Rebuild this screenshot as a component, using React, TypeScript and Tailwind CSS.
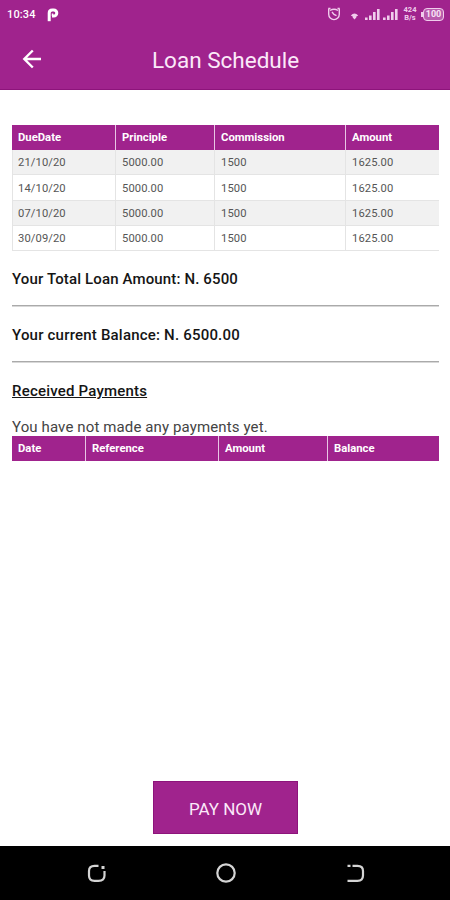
const schedule = [
  { dueDate: '21/10/20', principle: '5000.00', commission: '1500', amount: '1625.00' },
  { dueDate: '14/10/20', principle: '5000.00', commission: '1500', amount: '1625.00' },
  { dueDate: '07/10/20', principle: '5000.00', commission: '1500', amount: '1625.00' },
  { dueDate: '30/09/20', principle: '5000.00', commission: '1500', amount: '1625.00' },
]

function SignalIcon() {
  return (
    <svg width="15" height="13" viewBox="0 0 15 13" fill="#f0cdec">
      <rect x="0" y="9.500" width="2.600" height="2.500" />
      <rect x="4" y="7.500" width="2.600" height="4.500" />
      <rect x="8" y="4" width="2.600" height="8" />
      <rect x="12" y="1" width="2.600" height="11" />
    </svg>
  )
}

function StatusBar() {
  return (
    <div className="flex h-[28px] items-center pl-[7px] pr-[6px] text-white">
      <span className="w-[29px] whitespace-nowrap pt-px text-[11px] font-medium leading-[28px] tracking-[0.15px]">10:34</span>
      <svg className="ml-[11px] mt-px" width="12" height="14" viewBox="0 0 12 14" fill="none" stroke="#fff" strokeWidth="3">
        <path d="M2.200 13.200V8" />
        <path d="M2.200 8V5q0-3 3-3h1.600a3 3 0 0 1 0 6H5" />
        <path d="M5.500 8V5.500" strokeWidth="1.500" />
      </svg>
      <div className="ml-auto flex items-center">
        <svg width="14" height="14" viewBox="0 0 14 14" fill="none" stroke="#f0cdec" strokeWidth="1.4">
          <path d="M1.2 1.5h2.3M10.5 1.5h2.3M1.7 2v5.3a5.3 5.3 0 0 0 10.6 0V2" />
          <path d="M3 3.5Q7 1 11 3.5M5 5l2 2.5 2.5 1.2" />
        </svg>
        <svg className="ml-[9px] mt-[3px]" width="9" height="8" viewBox="0 0 9 8" fill="#f0cdec">
          <path d="M.8 3.600Q4.500-.6 8.200 3.600L6.300 4.400V5.500L4.500 7.600L2.700 5.500V4.400Z" />
        </svg>
        <span className="ml-[6px]"><SignalIcon /></span>
        <span className="ml-[3px]"><SignalIcon /></span>
        <div className="ml-[5px] flex w-[14px] flex-col items-center text-[7.5px] font-bold leading-[8px] text-[#f0cdec]">
          <span>424</span>
          <span>B/s</span>
        </div>
        <div className="ml-[4px] flex items-center">
          <div className="h-[5px] w-[2px] bg-[#f0cdec]" />
          <div className="flex h-[13px] w-[21px] items-center justify-center rounded-[4px] border border-[#f0cdec] bg-[#b95bad] text-[9px] font-bold leading-none text-[#f7e3f5]">
            100
          </div>
        </div>
      </div>
    </div>
  )
}

function HeaderCell({ label, first = false }: { label: string; first?: boolean }) {
  return (
    <th className={`h-[25px] pl-[6px] text-left align-middle text-[11.3px] font-bold leading-none text-white ${first ? '' : 'border-l border-[#e8c6e5]'}`}>
      {label}
    </th>
  )
}

function ScheduleTable() {
  return (
    <table className="w-[427px] table-fixed border-separate border-spacing-0">
      <colgroup>
        <col className="w-[103px]" />
        <col className="w-[99px]" />
        <col className="w-[131px]" />
        <col className="w-[94px]" />
      </colgroup>
      <thead>
        <tr className="bg-[#a0238d]">
          <HeaderCell label="DueDate" first />
          <HeaderCell label="Principle" />
          <HeaderCell label="Commission" />
          <HeaderCell label="Amount" />
        </tr>
      </thead>
      <tbody className="text-[11.2px] leading-none tracking-[0.1px] text-[#555]">
        {schedule.map((row) => (
          <tr key={row.dueDate} className="h-[25px] odd:bg-[#f1f1f1] nth-[2]:h-[26px]">
            {[row.dueDate, row.principle, row.commission, row.amount].map((value, i) => (
              <td key={i} className="border-b border-l border-[#e4e4e4] pl-[6px] pt-[2px] align-middle first:pl-[5px]">
                {value}
              </td>
            ))}
          </tr>
        ))}
      </tbody>
    </table>
  )
}

function PaymentsTable() {
  return (
    <table className="w-[427px] table-fixed border-separate border-spacing-0">
      <colgroup>
        <col className="w-[73px]" />
        <col className="w-[133px]" />
        <col className="w-[109px]" />
        <col className="w-[112px]" />
      </colgroup>
      <thead>
        <tr className="bg-[#a0238d]">
          <HeaderCell label="Date" first />
          <HeaderCell label="Reference" />
          <HeaderCell label="Amount" />
          <HeaderCell label="Balance" />
        </tr>
      </thead>
    </table>
  )
}

export default function App() {
  return (
    <div className="flex h-[900px] w-[450px] flex-col overflow-hidden bg-white font-['Roboto',sans-serif]">
      <header className="h-[90px] shrink-0 border-b border-[#8d147b] bg-[#a0238d]">
        <StatusBar />
        <div className="flex h-[62px] items-center pl-[20px]">
          <svg width="24" height="24" viewBox="0 0 24 24" fill="none" stroke="#fff" strokeWidth="2.4">
            <path d="M21 12H4.500M12.800 3.500L4.300 12l8.500 8.500" />
          </svg>
          <h1 className="ml-[108px] pt-[2px] text-[22.5px] leading-none text-[#fbe9f9]">Loan Schedule</h1>
        </div>
      </header>

      <main className="flex flex-1 flex-col pl-[12px] pr-[11px] pt-[35px]">
        <ScheduleTable />
        <p className="mt-[18px] text-[15px] font-medium leading-[20px] tracking-[0.14px] text-[#151515]">Your Total Loan Amount: N. 6500</p>
        <hr className="mt-[16px] border-t border-b border-t-[#aaa] border-b-[#d8d8d8]" />
        <p className="mt-[18px] text-[15px] font-medium leading-[20px] tracking-[0.2px] text-[#151515]">Your current Balance: N. 6500.00</p>
        <hr className="mt-[16px] border-t border-b border-t-[#aaa] border-b-[#d8d8d8]" />
        <h2 className="mt-[18px] text-[15px] font-medium leading-[20px] tracking-[0.2px] text-[#151515] underline">Received Payments</h2>
        <p className="mt-[16px] h-[19px] text-[15px] leading-[20px] tracking-[0.12px] text-[#444]">You have not made any payments yet.</p>
        <PaymentsTable />
        <button className="mb-[12px] ml-[141px] mt-auto h-[53px] w-[145px] border border-[#8d147b] bg-[#a0238d] pt-[3px] text-[17px] leading-none text-[#fbe9f9]">
          PAY NOW
        </button>
      </main>

      <nav className="flex h-[54px] shrink-0 items-center justify-between bg-black pl-[86px] pr-[84px]">
        <svg width="20" height="20" viewBox="0 0 20 20" fill="none" stroke="#d4d4d4" strokeWidth="2.200">
          <path d="M12.500 2.800H8.500Q3 2.800 3 8v4.500Q3 17.800 8.500 17.800h4Q18.500 17.800 18.500 12.500V8" />
          <path d="M15.500 4.500h3" strokeWidth="3" />
        </svg>
        <svg width="22" height="22" viewBox="0 0 22 22" fill="none" stroke="#d4d4d4" strokeWidth="2.200">
          <circle cx="11" cy="11" r="8.700" />
        </svg>
        <svg width="20" height="20" viewBox="0 0 20 20" fill="none" stroke="#d4d4d4" strokeWidth="2.200">
          <path d="M1.500 2.800h3M6.500 2.800h5Q17 2.800 17 8v4.500Q17 17.800 11.500 17.800H1.500" />
        </svg>
      </nav>
    </div>
  )
}
